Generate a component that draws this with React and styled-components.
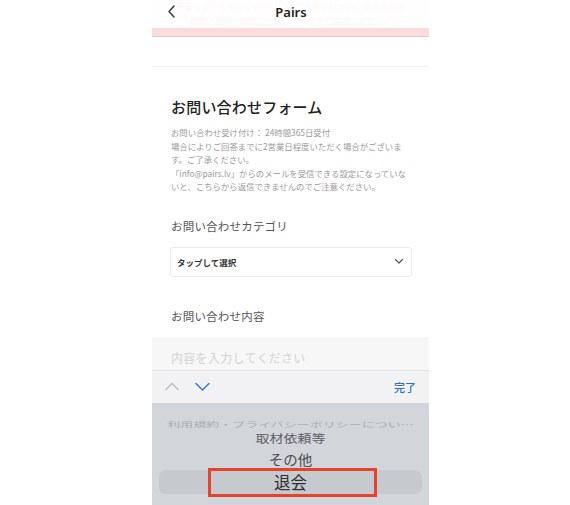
import React from 'react'
import styled, { createGlobalStyle } from 'styled-components'

const Global = createGlobalStyle`
  html, body {
    margin: 0;
    padding: 0;
    background: #fff;
  }
  body {
    font-family: "Noto Sans CJK JP", "Noto Sans", sans-serif;
    -webkit-font-smoothing: antialiased;
  }
`

const Page = styled.div`
  width: 570px;
  height: 505px;
  overflow: hidden;
  background: #fff;
`

const Phone = styled.div`
  margin-left: 152px;
  width: 277px;
  height: 505px;
  display: flex;
  flex-direction: column;
  background: #fff;
  position: relative;
  overflow: hidden;
`

const Top = styled.div`
  position: relative;
  height: 37px;
  flex: 0 0 auto;
`

const Alert = styled.div`
  height: 37px;
  background: #fbdcdc;
  border-bottom: 1px solid #efc4c4;
  display: flex;
  flex-direction: column;
  align-items: center;
  box-sizing: border-box;
  gap: 4px;
`

const AlertLine = styled.div`
  font-size: 8.5px;
  line-height: 10px;
  color: #d9534f;
  white-space: nowrap;
  margin-top: ${p => p.top || 0}px;
`

const Header = styled.div`
  position: absolute;
  left: 0;
  top: 0;
  right: 0;
  height: 28px;
  background: rgba(255, 255, 255, 0.95);
  display: flex;
  align-items: center;
  justify-content: center;
`

const Back = styled.svg`
  position: absolute;
  left: 14px;
  top: 4px;
`

const Title = styled.div`
  font-family: "Noto Sans", "Noto Sans CJK JP", sans-serif;
  font-size: 13px;
  font-weight: 600;
  color: #222;
  margin-left: 1px;
  margin-top: -4px;
`

const Divider = styled.div`
  margin-top: 29px;
  height: 1px;
  background: #efefef;
`

const Content = styled.div`
  padding: 0 17px 0 19px;
  display: flex;
  flex-direction: column;
`

const FormTitle = styled.h1`
  margin: 30px 0 0;
  font-size: 15px;
  line-height: 20px;
  font-weight: 500;
  color: #222;
  letter-spacing: 0.2px;
`

const Note = styled.p`
  margin: 9px 0 0;
  font-size: 8.4px;
  line-height: 13.6px;
  color: #9a9a9a;
  white-space: pre-line;
`

const Label = styled.div`
  margin-top: ${p => p.top}px;
  font-size: 11.5px;
  line-height: 16px;
  color: #555;
  letter-spacing: 0.2px;
`

const Select = styled.div`
  margin-top: 13px;
  margin-left: -1px;
  height: 30px;
  border: 1px solid #ececec;
  border-radius: 3px;
  box-sizing: border-box;
  display: flex;
  align-items: center;
  justify-content: space-between;
  padding: 0 7px 0 6px;
`

const SelectText = styled.span`
  font-size: 8.5px;
  font-weight: 700;
  color: #333;
`

const TextArea = styled.div`
  margin-top: 13px;
  height: 33px;
  background: #f7f7f7;
  padding: 14px 19px 0;
  box-sizing: border-box;
  font-size: 12px;
  line-height: 14px;
  color: #d4d4d4;
  letter-spacing: 0.3px;
  overflow: hidden;
  flex: 0 0 auto;
`

const Toolbar = styled.div`
  height: 33px;
  flex: 0 0 auto;
  background: #f2f2f4;
  border-top: 1px solid #e2e2e5;
  box-sizing: border-box;
  display: flex;
  align-items: center;
  padding: 0 13px;
  gap: 16px;
`

const Done = styled.span`
  margin-left: auto;
  font-size: 11px;
  color: #2f6fd6;
  font-weight: 500;
`

const Picker = styled.div`
  flex: 1;
  background: #d2d5da;
  padding-top: 17px;
  display: flex;
  flex-direction: column;
  align-items: stretch;
`

const Item = styled.div`
  height: ${p => p.h}px;
  flex: 0 0 auto;
  display: flex;
  align-items: center;
  justify-content: center;
  font-size: ${p => p.size}px;
  color: ${p => p.color};
  white-space: nowrap;
  position: relative;
  ${p => p.selected && `
    margin: 0 7px;
    background: #c6c9ce;
    border-radius: 7px;
  `}
`

const Squash = styled.span`
  display: inline-block;
  transform: scaleY(${p => p.sy});
`

const Highlight = styled.div`
  position: absolute;
  left: 49px;
  top: -2px;
  width: 169px;
  height: 29px;
  border: 3px solid #e2452b;
  box-sizing: border-box;
`

export default function App() {
  return (
    <Page>
      <Global />
      <Phone>
        <Top>
          <Alert>
            <AlertLine top={1}>不審なメールやメッセージにはご注意ください。退会手続き</AlertLine>
            <AlertLine>お問い合わせの前にヘルプページをご確認ください。</AlertLine>
          </Alert>
          <Header>
            <Back width="12" height="16" viewBox="0 0 12 16">
              <polyline points="8,2 3,7.5 8,13" fill="none" stroke="#333" strokeWidth="1.4" strokeLinecap="round" strokeLinejoin="round" />
            </Back>
            <Title>Pairs</Title>
          </Header>
        </Top>
        <Divider />
        <Content>
          <FormTitle>お問い合わせフォーム</FormTitle>
          <Note>{'お問い合わせ受け付け： 24時間365日受付\n場合によりご回答までに2営業日程度いただく場合がございます。ご了承ください。\n「info@pairs.lv」からのメールを受信できる設定になっていないと、こちらから返信できませんのでご注意ください。'}</Note>
          <Label top={24}>お問い合わせカテゴリ</Label>
          <Select>
            <SelectText>タップして選択</SelectText>
            <svg width="10" height="7" viewBox="0 0 10 7">
              <polyline points="1.5,1.5 5,5 8.5,1.5" fill="none" stroke="#555" strokeWidth="1.2" strokeLinecap="round" strokeLinejoin="round" />
            </svg>
          </Select>
          <Label top={31}>お問い合わせ内容</Label>
        </Content>
        <TextArea>内容を入力してください</TextArea>
        <Toolbar>
          <svg width="14" height="9" viewBox="0 0 14 9">
            <polyline points="1,7.5 7,1.5 13,7.5" fill="none" stroke="#b9b9bd" strokeWidth="1.3" strokeLinecap="round" strokeLinejoin="round" />
          </svg>
          <svg width="15" height="10" viewBox="0 0 15 10">
            <polyline points="1,1.5 7.5,8 14,1.5" fill="none" stroke="#3a78dd" strokeWidth="1.5" strokeLinecap="round" strokeLinejoin="round" />
          </svg>
          <Done>完了</Done>
        </Toolbar>
        <Picker>
          <Item h={8} size={13} color="#abaeb4"><Squash sy={0.55}>利用規約・プライバシーポリシーについ…</Squash></Item>
          <Item h={20} size={14} color="#5e6066"><Squash sy={0.85}>取材依頼等</Squash></Item>
          <Item h={22} size={14.5} color="#4a4c50"><Squash sy={0.95}>その他</Squash></Item>
          <Item h={24} size={16.5} color="#2e2f32" selected>
            退会
            <Highlight />
          </Item>
        </Picker>
      </Phone>
    </Page>
  )
}
